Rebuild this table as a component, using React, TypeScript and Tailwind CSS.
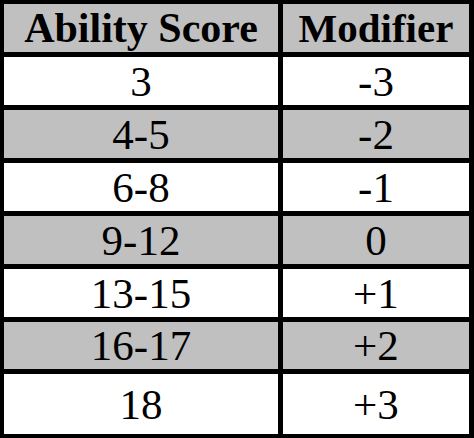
import React from "react";

const rows: [string, string][] = [
  ["3", "-3"],
  ["4-5", "-2"],
  ["6-8", "-1"],
  ["9-12", "0"],
  ["13-15", "+1"],
  ["16-17", "+2"],
  ["18", "+3"],
];

export default function App() {
  return (
    <div
      className="w-[474px] h-[438px] bg-black pt-[4px] pl-[4px] pr-[5px] pb-[4px] grid grid-cols-[274px_186px] grid-rows-[48px_48px_48px_48px_48px_48px_47px_60px] gap-[5px] text-black"
      style={{ fontFamily: '"Liberation Serif", "DejaVu Serif", serif' }}
    >
      <div className="bg-[#c0c0c0] flex items-center justify-center text-[42px] font-bold leading-none">
        Ability Score
      </div>
      <div className="bg-[#c0c0c0] flex items-center justify-center text-[41px] font-bold leading-none">
        Modifier
      </div>
      {rows.map(([a, b], i) => {
        const bg = i % 2 === 1 ? "bg-[#c0c0c0]" : "bg-white";
        return (
          <React.Fragment key={i}>
            <div className={`${bg} flex items-center justify-center text-[43px] leading-none`}>{a}</div>
            <div className={`${bg} flex items-center justify-center text-[43px] leading-none`}>{b}</div>
          </React.Fragment>
        );
      })}
    </div>
  );
}
